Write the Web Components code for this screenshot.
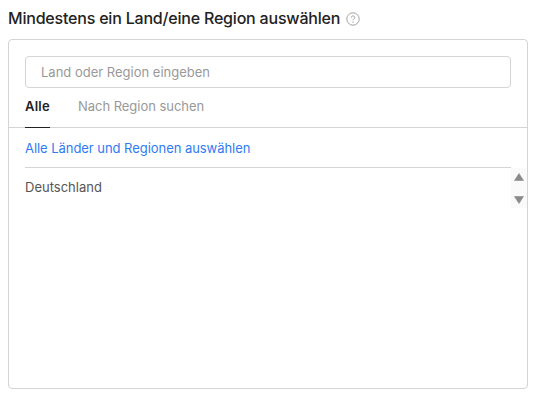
<!doctype html>
<html lang="de">
<head>
    <title>Land auswählen</title>
    <meta charset="utf-8">
    <style>
        body {
            margin: 0;
            background: #fff;
            font-family: Inter, "Liberation Sans", sans-serif;
        }
    </style>
</head>
<body>
    <template id="picker-tpl">
        <style>
            :host {
                display: block;
                width: 520px;
                padding: 8px 0 0 8px;
                color: #222;
            }

            h1 {
                margin: 0 0 10px;
                display: flex;
                align-items: center;
                gap: 6px;
                height: 21px;
                font-size: 16px;
                line-height: 21px;
                font-weight: 500;
                letter-spacing: -0.2px;
            }

            svg {
                display: block;
            }

            .box {
                box-sizing: border-box;
                height: 350px;
                border: 1px solid #d4d4d4;
                border-radius: 4px;
            }

            .top {
                padding: 16px 16px 0;
            }
        </style>
        <h1>
            <span>Mindestens ein Land/eine Region auswählen</span>
            <svg width="14" height="14" viewBox="0 0 14 14" fill="none">
                <circle cx="7" cy="7" r="6.2" stroke="#999" stroke-width="0.9"></circle>
                <path d="M5.3 5.6a1.7 1.7 0 1 1 2.6 1.4c-.6.4-.9.7-.9 1.4" stroke="#999" stroke-width="0.9"></path>
                <circle cx="7" cy="10.2" r="0.6" fill="#999"></circle>
            </svg>
        </h1>
        <div class="box">
            <div class="top">
                <x-search placeholder="Land oder Region eingeben"></x-search>
                <x-tabs></x-tabs>
            </div>
            <x-region-list></x-region-list>
        </div>
    </template>

    <template id="search-tpl">
        <style>
            :host {
                display: block;
                box-sizing: border-box;
                height: 32px;
                border: 1px solid #d4d4d4;
                border-radius: 4px;
                padding: 0 15px;
                font-size: 13px;
                line-height: 30px;
                color: #999;
            }
        </style>
        <span class="text"></span>
    </template>

    <template id="tabs-tpl">
        <style>
            :host {
                display: flex;
                position: relative;
                z-index: 1;
                gap: 28px;
                height: 39px;
                font-size: 13px;
                line-height: 36px;
            }

            .tab {
                box-sizing: border-box;
                height: 40px;
                color: #999;
            }

            .active {
                color: #222;
                font-weight: 600;
                letter-spacing: 0.25px;
                border-bottom: 1px solid #222;
            }

            .tab + .tab {
                letter-spacing: -0.03px;
            }
        </style>
        <div class="tab active">Alle</div>
        <div class="tab">Nach Region suchen</div>
    </template>

    <template id="list-tpl">
        <style>
            :host {
                display: block;
                position: relative;
                border-top: 1px solid #d4d4d4;
                padding: 0 16px;
                font-size: 13px;
            }

            .all {
                height: 39px;
                line-height: 40px;
                color: #2f7bf5;
                border-bottom: 1px solid #d4d4d4;
                letter-spacing: -0.05px;
            }

            .item {
                height: 40px;
                line-height: 39px;
                color: #555;
            }

            .scroll {
                position: absolute;
                top: 40px;
                right: 0;
                width: 16px;
                height: 40px;
                background: #fafafa;
                display: flex;
                flex-direction: column;
                justify-content: space-between;
                align-items: center;
                padding: 5px 0 4px;
                box-sizing: border-box;
            }

            svg {
                display: block;
            }
        </style>
        <div class="all">Alle Länder und Regionen auswählen</div>
        <div class="item">Deutschland</div>
        <div class="scroll">
            <svg width="10" height="8" viewBox="0 0 10 8"><path d="M5 0.5 9.5 7.5H0.5Z" fill="#8a8a8a" stroke="#8a8a8a" stroke-width="0.6" stroke-linejoin="round"></path></svg>
            <svg width="10" height="8" viewBox="0 0 10 8"><path d="M0.5 0.5H9.5L5 7.5Z" fill="#8a8a8a" stroke="#8a8a8a" stroke-width="0.6" stroke-linejoin="round"></path></svg>
        </div>
    </template>

    <x-region-picker></x-region-picker>

<script>
    function fromTemplate(el, id) {
        el.attachShadow({ mode: 'open' });
        el.shadowRoot.appendChild(document.querySelector(id).content.cloneNode(true));
    }

    customElements.define('x-search', class extends HTMLElement {
        constructor() {
            super();
            fromTemplate(this, '#search-tpl');
        }

        connectedCallback() {
            this.shadowRoot.querySelector('.text').textContent = this.getAttribute('placeholder');
        }
    });

    customElements.define('x-tabs', class extends HTMLElement {
        constructor() {
            super();
            fromTemplate(this, '#tabs-tpl');
        }
    });

    customElements.define('x-region-list', class extends HTMLElement {
        constructor() {
            super();
            fromTemplate(this, '#list-tpl');
        }
    });

    customElements.define('x-region-picker', class extends HTMLElement {
        constructor() {
            super();
            fromTemplate(this, '#picker-tpl');
        }
    });
</script>
</body>
</html>
